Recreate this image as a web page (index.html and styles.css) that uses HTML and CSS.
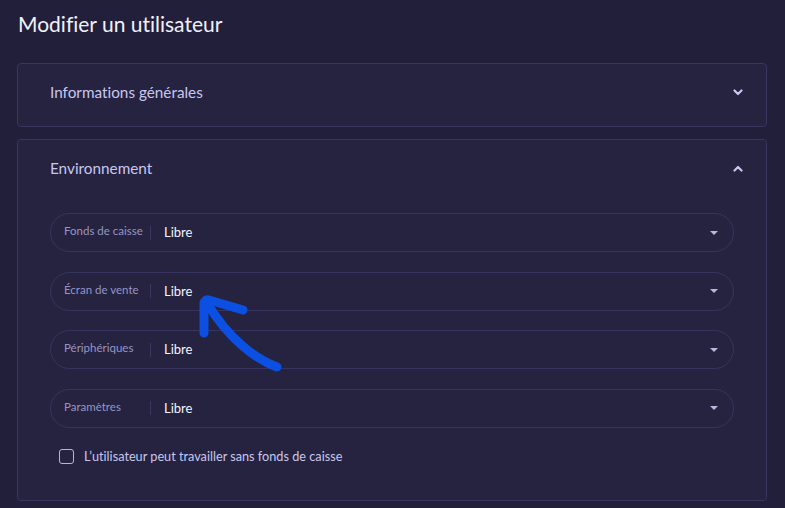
FILE: index.html
```html
<!DOCTYPE html>
<html lang="fr">
<head>
<meta charset="utf-8">
<link rel="stylesheet" href="styles.css">
</head>
<body>
<div class="page">
  <h1 class="title">Modifier un utilisateur</h1>
  <section class="card">
    <div class="card-head">
      <span>Informations générales</span>
      <svg class="chev" width="10" height="7" viewBox="0 0 10 7"><path d="M1.5 1.5 L5 5 L8.5 1.5" fill="none" stroke="#c9c7ef" stroke-width="2.2" stroke-linecap="round" stroke-linejoin="round"/></svg>
    </div>
  </section>
  <section class="card card-open">
    <div class="card-head">
      <span>Environnement</span>
      <svg class="chev" width="10" height="7" viewBox="0 0 10 7"><path d="M1.5 5.5 L5 2 L8.5 5.5" fill="none" stroke="#c9c7ef" stroke-width="2.2" stroke-linecap="round" stroke-linejoin="round"/></svg>
    </div>
    <div class="card-body">
      <div class="field"><span class="label">Fonds de caisse</span><span class="sep"></span><span class="value">Libre</span><span class="caret"></span></div>
      <div class="field"><span class="label">Écran de vente</span><span class="sep"></span><span class="value">Libre</span><span class="caret"></span></div>
      <div class="field"><span class="label">Périphériques</span><span class="sep"></span><span class="value">Libre</span><span class="caret"></span></div>
      <div class="field"><span class="label">Paramètres</span><span class="sep"></span><span class="value">Libre</span><span class="caret"></span></div>
      <label class="check"><span class="box"></span><span>L’utilisateur peut travailler sans fonds de caisse</span></label>
    </div>
  </section>
  <svg class="arrow" width="100" height="90" viewBox="0 0 100 90">
    <path d="M79 75 C 57 67, 30 46, 9 11" fill="none" stroke="#0b50e3" stroke-width="9" stroke-linecap="round"/>
    <path d="M6 41 L6 11 Q 7 7 11 8 L45 18" fill="none" stroke="#0b50e3" stroke-width="9" stroke-linecap="round" stroke-linejoin="round"/>
  </svg>
</div>
</body>
</html>
```
FILE: styles.css
```css
* { box-sizing: border-box; }
html, body { margin: 0; padding: 0; }
body {
  background: #221f3a;
  font-family: Lato, "Noto Sans", sans-serif;
  font-variant-ligatures: none;
  color: #c9c7ef;
  width: 785px;
  height: 508px;
  overflow: hidden;
}
.page {
  position: relative;
  padding: 10px 18px 0 17px;
}
.title {
  margin: 0 0 25px 1px;
  font-size: 21px;
  font-weight: 400;
  color: #f2f1fb;
  line-height: 28px;
}
.card {
  background: #25233f;
  border: 1px solid #39355f;
  border-radius: 4px;
  width: 750px;
  margin-bottom: 12px;
}
.card-head {
  height: 62px;
  display: flex;
  align-items: center;
  justify-content: space-between;
  padding: 0 23px 6px 32px;
  font-size: 15.3px;
  color: #c9c7ef;
}
.chev { display: block; margin-top: 1px; }
.card-body {
  padding: 11px 32px 36px 32px;
  display: flex;
  flex-direction: column;
  gap: 19.6px;
}
.field {
  height: 39px;
  border: 1px solid #38345f;
  border-radius: 20px;
  display: flex;
  align-items: center;
  padding: 0 14px 0 13px;
}
.label {
  width: 86px;
  font-size: 11.5px;
  color: #9795c6;
  margin-top: -4px;
}
.sep {
  width: 1px;
  height: 14px;
  background: #3a3762;
  margin-right: 13px;
}
.value {
  flex: 1;
  font-size: 13px;
  color: #f4f3fd;
  margin-top: -1px;
}
.caret {
  width: 0;
  height: 0;
  border-left: 4px solid transparent;
  border-right: 4px solid transparent;
  border-top: 4px solid #b9b7e0;
  margin-right: 1px;
}
.check {
  display: flex;
  align-items: center;
  gap: 10px;
  padding-left: 9px;
  margin-top: 1px;
  font-size: 12.7px;
  color: #c9c7ef;
}
.box {
  width: 15px;
  height: 15px;
  border: 1.5px solid #b8b6d8;
  border-radius: 3px;
}
.arrow {
  position: absolute;
  left: 198px;
  top: 292px;
}
```
